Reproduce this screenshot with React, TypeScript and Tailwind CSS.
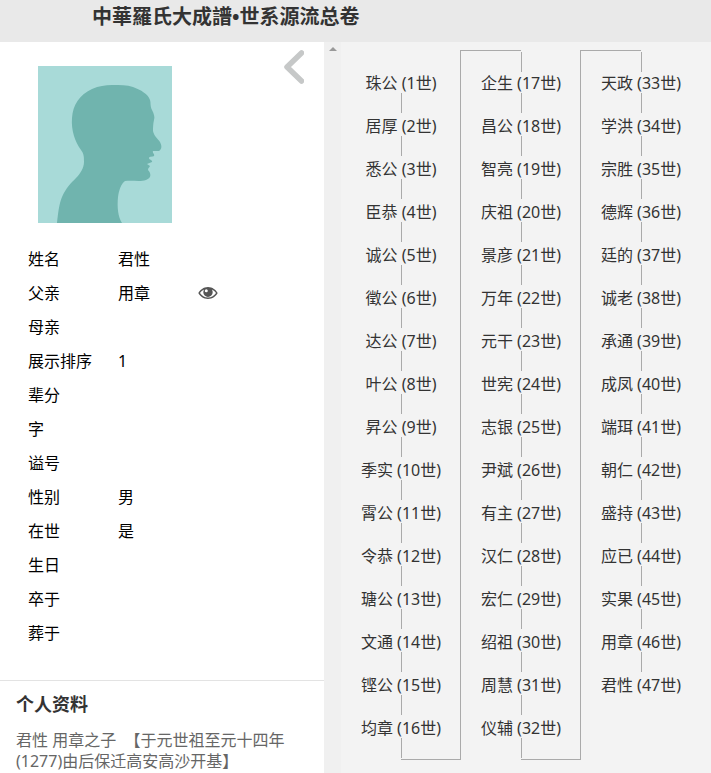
type Ancestor = { name: string; generation: number };

const names = [
  "珠公", "居厚", "悉公", "臣恭", "诚公", "徵公", "达公", "叶公",
  "昇公", "季实", "霄公", "令恭", "瑭公", "文通", "铿公", "均章",
  "企生", "昌公", "智亮", "庆祖", "景彦", "万年", "元干", "世宪",
  "志银", "尹斌", "有主", "汉仁", "宏仁", "绍祖", "周慧", "仪辅",
  "天政", "学洪", "宗胜", "德辉", "廷的", "诚老", "承通", "成凤",
  "端珥", "朝仁", "盛持", "应已", "实果", "用章", "君性",
];

const PER_COLUMN = 16;

const ancestors: Ancestor[] = names.map((name, i) => ({ name, generation: i + 1 }));

const columns = [0, 1, 2].map((c) => ancestors.slice(c * PER_COLUMN, (c + 1) * PER_COLUMN));

const fields = [
  { label: "姓名", value: "君性" },
  { label: "父亲", value: "用章", viewable: true },
  { label: "母亲", value: "" },
  { label: "展示排序", value: "1" },
  { label: "辈分", value: "" },
  { label: "字", value: "" },
  { label: "谥号", value: "" },
  { label: "性别", value: "男" },
  { label: "在世", value: "是" },
  { label: "生日", value: "" },
  { label: "卒于", value: "" },
  { label: "葬于", value: "" },
];

function Avatar() {
  return (
    <svg viewBox="0 0 134 157" className="w-[134px] h-[157px]" aria-hidden="true">
      <rect width="134" height="157" fill="#a8dad8" />
      <path
        fill="#70b4ae"
        d="M19 157 C20 148 21 138 24 131 C28 122 33 117 38 112 C42 108 46 102 46 96 C46 91 46 88 43 84 C37 76 33 64 34 52 C35 39 41 29 54 23 C61 20 67 19 74 19 C82 19 89 19 95 21 C103 24 110 28 112 34 C113 37 112 40 114 44 C116 48 117 51 116 54 C115 58 115 62 115 65 C116 70 120 73 122 76 C124 80 124 83 121 85 L115 85 C114 87 117 88 116 90 C115 91 111 90 111 92 C111 94 115 94 114 96 L109 98 L112 100 C111 102 110 102 110 104 C113 107 114 112 108 114 C102 116 94 114 87 115 C83 118 81 124 80 131 C79 141 80 151 84 157 Z"
      />
    </svg>
  );
}

function EyeIcon() {
  return (
    <svg viewBox="0 0 20 14" className="w-5 h-3.5" aria-hidden="true">
      <path
        fill="#555"
        fillRule="evenodd"
        d="M10 1 C5.500 1 2 4 0.300 7 C2 10.200 5.500 13 10 13 S18 10.200 19.700 7 C18 4 14.500 1 10 1 Z M6.200 3.500 C5.600 4.400 5.300 5.300 5.300 6.300 A4.700 4.700 0 0 0 14.700 6.300 C14.700 5.300 14.400 4.400 13.800 3.500 C15.700 4.300 17 5.600 18 7 C16.300 9.700 13.500 11.600 10 11.600 S3.700 9.700 2 7 C3 5.600 4.300 4.300 6.200 3.500 Z M8.300 3.200 A1.500 1.500 0 1 0 8.300 6.200 A1.500 1.500 0 0 0 8.300 3.200 Z"
      />
    </svg>
  );
}

function Profile() {
  return (
    <aside className="w-[324px] shrink-0 bg-white">
      <div className="flex items-start justify-between pt-2 pl-[38px] pr-5">
        <div className="pt-4">
          <Avatar />
        </div>
        <button type="button" aria-label="收起">
          <svg viewBox="0 0 20 34" className="w-5 h-[34px]" aria-hidden="true">
            <path
              d="M17.500 3 L3 17 L17.500 31"
              fill="none"
              stroke="#c6c8c8"
              strokeWidth="5.500"
              strokeLinecap="round"
              strokeLinejoin="round"
            />
          </svg>
        </button>
      </div>

      <dl className="pt-[19px] pb-[30px] pl-7 text-black">
        {fields.map((field) => (
          <div key={field.label} className="flex items-center h-[34px]">
            <dt className="w-[90px]">{field.label}</dt>
            <dd className="flex items-center">
              <span className="w-20">{field.value}</span>
              {field.viewable && (
                <button type="button" aria-label="查看">
                  <EyeIcon />
                </button>
              )}
            </dd>
          </div>
        ))}
      </dl>

      <section className="border-t border-[#e3e3e3] px-4 pt-2.5">
        <h2 className="text-lg leading-[27px] font-bold">个人资料</h2>
        <p className="mt-3 leading-[21px] text-[#666] whitespace-pre-wrap">
          {"君性 用章之子  【于元世祖至元十四年(1277)由后保迁高安高沙开基】"}
        </p>
      </section>
    </aside>
  );
}

function LineageColumn({ people, first, last }: { people: Ancestor[]; first: boolean; last: boolean }) {
  return (
    <div className={first ? "pt-5" : "-ml-px border-l border-[#aaa]"}>
      {/* elbow coming over from the previous column */}
      {!first && (
        <>
          <div className="w-1/2 mb-px border-t border-[#aaa]" />
          <div className="ml-[50%] w-px h-5 -mb-0.5 bg-[#aaa]" />
        </>
      )}
      <ol>
        {people.map((person, i) => (
          <li key={person.generation}>
            <div className="pt-1 text-center leading-[19px] whitespace-nowrap">
              {person.name} ({person.generation}世)
            </div>
            {(i < people.length - 1 || !last) && <div className="ml-[50%] w-px h-5 bg-[#aaa]" />}
          </li>
        ))}
      </ol>
      {!last && <div className="ml-[50%] w-1/2 mt-px border-b border-[#aaa]" />}
    </div>
  );
}

export default function App() {
  return (
    <div className="min-h-screen flex flex-col bg-[#f3f3f3] text-base text-[#333] font-['Noto_Sans','Noto_Sans_CJK_SC',sans-serif]">
      <header className="h-[42px] bg-[#e9e9e9] pl-[92px]">
        <h1 className="text-xl leading-[34px] font-bold whitespace-nowrap">中華羅氏大成譜•世系源流总卷</h1>
      </header>

      <div className="flex flex-1">
        <Profile />

        {/* scroll track */}
        <div className="w-[17px] shrink-0 bg-[#f0f0f0] pt-[5px] pl-[5px]">
          <svg viewBox="0 0 8 4" className="w-2 h-1" aria-hidden="true">
            <path d="M4 0 L8 4 L0 4 Z" fill="#999" />
          </svg>
        </div>

        <main className="flex-1 pt-2">
          <div className="grid grid-cols-[120px_120px_120px]">
            {columns.map((people, i) => (
              <LineageColumn
                key={i}
                people={people}
                first={i === 0}
                last={i === columns.length - 1}
              />
            ))}
          </div>
        </main>
      </div>
    </div>
  );
}
